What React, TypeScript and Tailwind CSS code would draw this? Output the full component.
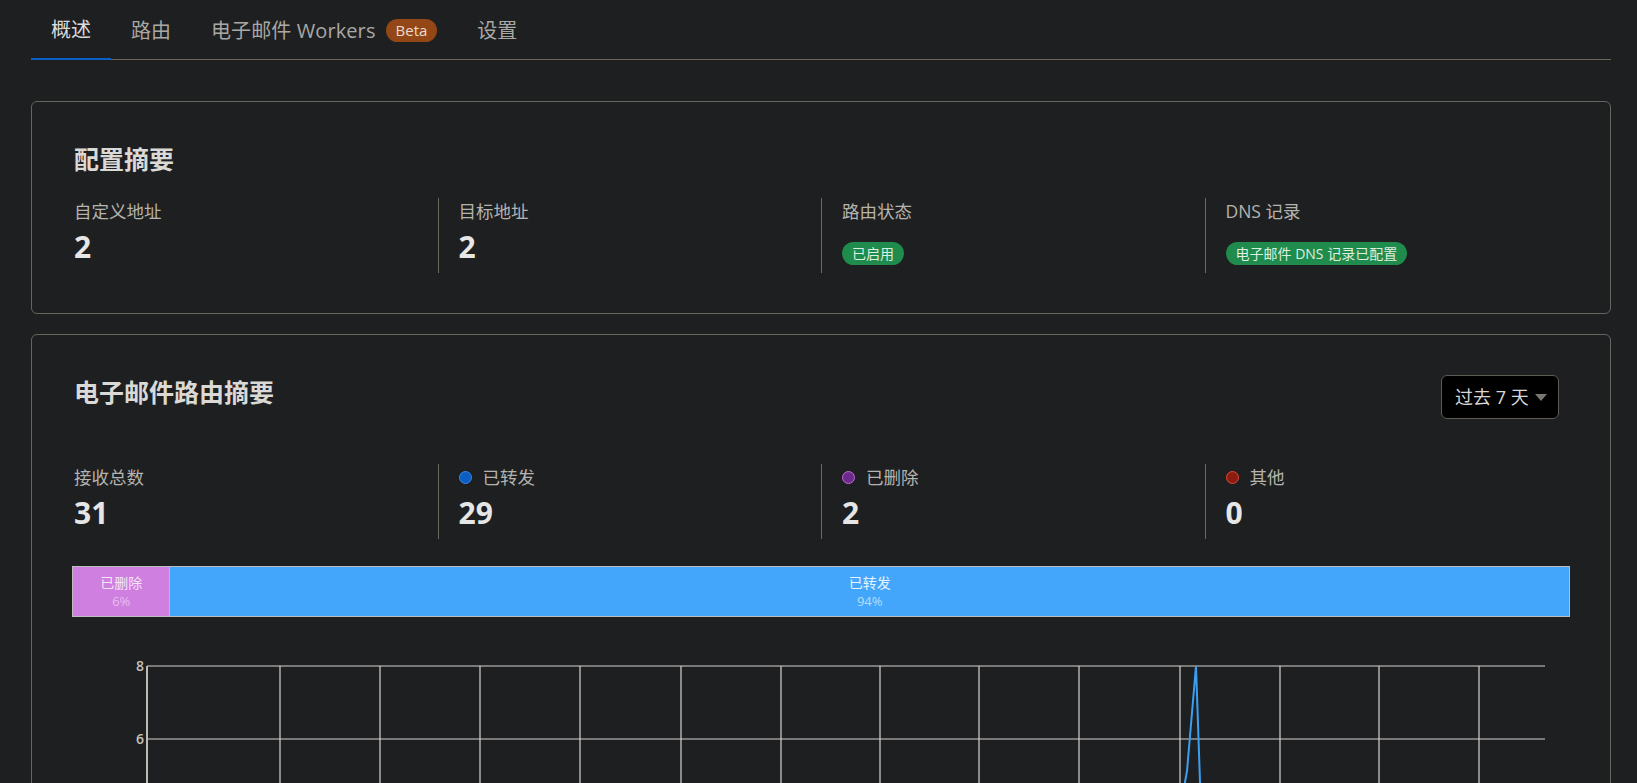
const font = { fontFamily: '"Open Sans", "Noto Sans CJK SC", sans-serif' };

const gridX = [279, 379, 479, 579, 680, 780, 879, 978, 1078, 1179, 1279, 1378, 1478];
const yTicks = [8, 6, 4, 2, 0];

function Stat({ label, value, dot, first }: { label: string; value?: string; dot?: string; first?: boolean }) {
  return (
    <div className={first ? "pl-5 pb-[6px]" : "pl-5 pb-[6px] border-l border-[#6d6860]"}>
      <div className="flex items-center gap-[11px] leading-[26px] text-[17.5px] text-[#b5b3ae]">
        {dot && <span className={"w-[13px] h-[13px] rounded-full border " + dot} />}
        <span>{label}</span>
      </div>
      {value !== undefined && (
        <div className="mt-[3px] leading-[40px] text-[30px] font-bold text-[#e6e6e6]">{value}</div>
      )}
    </div>
  );
}

function Chart() {
  // page x minus 53 = svg x; top gridline at y=30
  const ox = 53;
  const top = 30;
  const unit = 36.5;
  const y = (v: number) => top + (8 - v) * unit;
  const pts: [number, number][] = [
    [146, y(0)],
    [1160, y(0)],
    [1168, y(0.2)],
    [1184, 783 - 637],
    [1186, 772 - 637],
    [1195, y(8)],
    [1199, 783 - 637],
    [1205, y(0)],
    [1544, y(0)],
  ];
  return (
    <svg width={1536} height={340} className="block">
      {yTicks.map((t) => (
        <g key={t}>
          <text
            x={143 - ox}
            y={y(t) + 5}
            textAnchor="end"
            fontSize="14"
            fontWeight="600"
            fill="#c4c2bd"
            fontFamily="Open Sans, sans-serif"
          >
            {t}
          </text>
          <line x1={146 - ox} x2={1544 - ox} y1={y(t)} y2={y(t)} stroke="#d6d4cf" strokeWidth="1.2" />
        </g>
      ))}
      <line x1={146 - ox} x2={146 - ox} y1={top} y2={y(0)} stroke="#bdbbb6" strokeWidth="2" />
      {gridX.map((gx) => (
        <line key={gx} x1={gx - ox} x2={gx - ox} y1={top} y2={y(0)} stroke="#d6d4cf" strokeWidth="1.2" />
      ))}
      <polyline
        points={pts.map(([px, py]) => `${px - ox},${py}`).join(" ")}
        fill="none"
        stroke="#3a9ff0"
        strokeWidth="2"
      />
    </svg>
  );
}

export default function App() {
  return (
    <div className="min-h-screen bg-[#1e1f21] pl-[31px] pr-[26px]" style={font}>
      <div className="flex border-b border-[#6b6558] h-[60px]">
        <div className="flex items-center px-5 pt-[2px] text-[20px] text-[#dcdcdc] border-b-2 border-[#0b5fc4] -mb-px">
          概述
        </div>
        <div className="flex items-center px-5 pt-[2px] text-[20px] text-[#a9a8a4]">路由</div>
        <div className="flex items-center gap-[10px] px-5 pt-[2px] text-[20px] text-[#a9a8a4]">
          <span className="tracking-[0.1px]">电子邮件 Workers</span>
          <span className="h-[23px] px-[10px] rounded-full bg-[#934716] text-[15px] leading-[23px] text-[#e9ddd2]">
            Beta
          </span>
        </div>
        <div className="flex items-center px-5 pt-[2px] text-[20px] text-[#a9a8a4]">设置</div>
      </div>

      <div className="mt-[41px] border border-[#67645e] rounded-md px-[22px] pt-[41px] pb-[40px]">
        <div className="px-5 text-[25px] leading-[32px] font-bold text-[#dad9d6]">配置摘要</div>
        <div className="grid grid-cols-4 mt-[23px]">
          <Stat first label="自定义地址" value="2" />
          <Stat label="目标地址" value="2" />
          <div className="pl-5 pb-[6px] border-l border-[#6d6860]">
            <div className="leading-[26px] text-[17.5px] text-[#b5b3ae]">路由状态</div>
            <div className="mt-[18px] flex">
              <span className="h-[23px] px-[10px] rounded-full bg-[#1f8b4d] text-[14px] leading-[23px] text-[#dcefe0]">
                已启用
              </span>
            </div>
          </div>
          <div className="pl-5 pb-[6px] border-l border-[#6d6860]">
            <div className="leading-[26px] text-[17.5px] text-[#b5b3ae]">DNS 记录</div>
            <div className="mt-[18px] flex">
              <span className="h-[23px] px-[10px] rounded-full bg-[#1f8b4d] text-[14px] leading-[23px] text-[#dcefe0]">
                电子邮件 DNS 记录已配置
              </span>
            </div>
          </div>
        </div>
      </div>

      <div className="mt-[20px] border border-[#67645e] rounded-md px-[22px] pt-[40px] pb-[40px]">
        <div className="flex items-start justify-between">
          <div className="px-5 mt-[1px] text-[25px] leading-[32px] font-bold text-[#dad9d6]">电子邮件路由摘要</div>
          <div className="mr-[29px] w-[118px] h-[44px] flex items-center justify-between pl-[13px] pr-[11px] bg-black border border-[#5e5a54] rounded-md">
            <span className="text-[18px] text-[#d8d8d8]">过去 7 天</span>
            <span className="w-0 h-0 border-l-[6px] border-r-[6px] border-t-[7px] border-l-transparent border-r-transparent border-t-[#7a7772]" />
          </div>
        </div>

        <div className="grid grid-cols-4 mt-[45px]">
          <Stat first label="接收总数" value="31" />
          <Stat label="已转发" value="29" dot="bg-[#0a5ec4] border-[#3a8ae0]" />
          <Stat label="已删除" value="2" dot="bg-[#6c2a8c] border-[#c46ad8]" />
          <Stat label="其他" value="0" dot="bg-[#8c1c12] border-[#e24a34]" />
        </div>

        <div className="mx-[18px] mt-[27px] h-[51px] flex border border-[#bdbdbd] bg-[#bdbdbd] gap-px">
          <div className="w-[6.45%] bg-[#ce7fe0] flex flex-col items-center justify-center leading-[18px]">
            <span className="text-[14px] text-[#f4e6f6]">已删除</span>
            <span className="text-[13px] text-[#e9bdf0]">6%</span>
          </div>
          <div className="flex-1 bg-[#44a6fb] flex flex-col items-center justify-center leading-[18px]">
            <span className="text-[14px] text-[#e8f3fe]">已转发</span>
            <span className="text-[13px] text-[#b8dcfc]">94%</span>
          </div>
        </div>

        <div className="mt-[19px]">
          <Chart />
        </div>
      </div>
    </div>
  );
}
